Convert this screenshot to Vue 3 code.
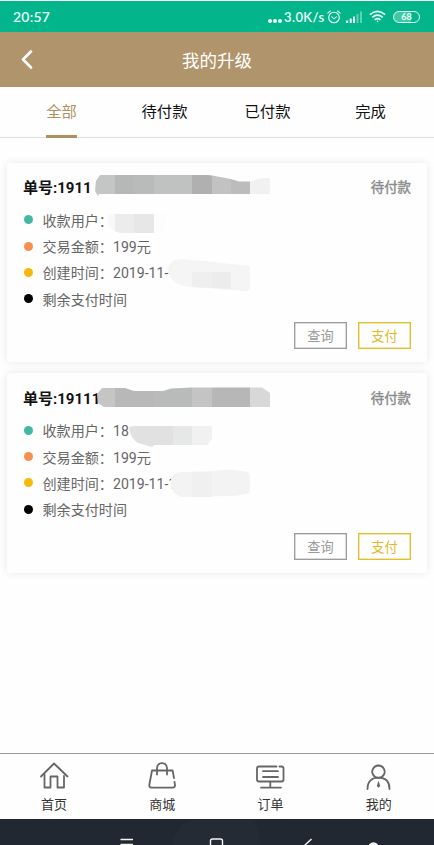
<script setup>
const tabs = ['全部', '待付款', '已付款', '完成']

const orders = [
  {
    id: '1911',
    user: '',
    amount: '199元',
    created: '2019-11-',
    masks: [
      { d: 'M91 33 L88 28 L89 18 L93 12 H108 V31 H92 Z', fill: '#c4c5c5' },
      { d: 'M108 12 H127 V31 H108 Z', fill: '#b6b7b7' },
      { d: 'M127 12 H147 V31 H127 Z', fill: '#b9baba' },
      { d: 'M147 12 H185 V31 H147 Z', fill: '#c0c1c1' },
      { d: 'M185 12 H201 L205 12.500 V31 H185 Z', fill: '#b0b0b0' },
      { d: 'M205 12.500 L224 16 V31 H205 Z', fill: '#c2c2c2' },
      { d: 'M224 16 L232 18.500 H243 V31 H224 Z', fill: '#bcbcbc' },
      { d: 'M243 18.500 L255 15 H263 V31 H243 Z', fill: '#f1f1f1' },
      { d: 'M102 51 H108 V68 Q101 66 101 58 Z', fill: '#f8f8f8' },
      { d: 'M108 51 H127 V70 H113 L108 68 Z', fill: '#ececec' },
      { d: 'M127 51 H147 V70 H127 Z', fill: '#e6e7e7' },
      { d: 'M147 51 H157 Q160 60 155 70 H147 Z', fill: '#fcfcfc' },
      { d: 'M161 106 Q162 97 174 96 L205 99 L243 103 V126 L239 128 L185 124 Q163 123 161 106 Z', fill: '#f5f5f5' },
      { d: 'M185 109 H205 V125 L185 124 Z', fill: '#efefef' },
      { d: 'M205 109 H224 V126 L205 125 Z', fill: '#ececec' },
    ],
  },
  {
    id: '19111',
    user: '18',
    amount: '199元',
    created: '2019-11-1',
    masks: [
      { d: 'M90 21 L95 15 H108 V34 H97 L91 30 Z', fill: '#c5c5c5' },
      { d: 'M108 15 H118 L127 18 H147 V34 H108 Z', fill: '#b8b8b8' },
      { d: 'M147 18 H156 L164 15.500 L185 14.500 V34 H147 Z', fill: '#b9baba' },
      { d: 'M185 14.500 H205 V34 H185 Z', fill: '#c4c4c4' },
      { d: 'M205 14.500 H243 V34 H205 Z', fill: '#b7b7b7' },
      { d: 'M243 14.500 H255 L263 20 V34 H243 Z', fill: '#d8d8d8' },
      { d: 'M122 54 L126 53 H166 V72 H147 L145 74 L131 70 Q123 65 122 54 Z', fill: '#e1e1e1' },
      { d: 'M166 53 H185 V72 H166 Z', fill: '#e6e7e7' },
      { d: 'M185 53 H205 V66 L200 72 H185 Z', fill: '#f1f1f1' },
      { d: 'M164 107 Q165 99 176 99 L207 98 Q215 96 228 97 L241 99 Q243 101 243 106 V119 Q240 122 224 123 L174 124 Q163 120 164 107 Z', fill: '#f3f3f3' },
      { d: 'M185 99 H205 V124 H185 Z', fill: '#f0f0f0' },
    ],
  },
]

const navItems = [
  {
    label: '首页',
    paths: ['M1 14.500 L14 1.500 L27.500 14.500', 'M4.500 12.500 V25.500 H10.500 V14.500 H17.500 V25.500 H24 V14'],
  },
  {
    label: '商城',
    paths: ['M9 12.500 V6 Q9.500 1.200 14 1.200 Q18.500 1.200 19 6 V12.500', 'M26 16 L24.600 8.500 H4 L1.300 23 Q1 25.600 3.500 25.600 H24.500 Q27.300 25.600 27 23 L26.500 20'],
  },
  {
    label: '订单',
    paths: ['M20.500 4.500 H3 Q1 4.500 1 6.500 V17.500 Q1 19.500 3 19.500 H25.500 Q27.500 19.500 27.500 17.500 V6.500 Q27.500 4.500 25.500 4.500 H23.500', 'M7 9.200 H22 M7 15 H22', 'M14.300 20 V25.500 M5 25.600 H25'],
  },
  {
    label: '我的',
    paths: ['M14.500 3.500 A6.200 6.200 0 1 1 14.400 3.500', 'M3.500 27 C3.500 19 8 15.700 14.500 15.700 C21 15.700 25.500 19 25.500 27'],
    tie: 'M14.500 18.500 L16.200 24 L14.500 25.800 L12.800 24 Z',
  },
]
</script>

<template>
  <div class="screen">
    <div class="status">
      <span class="clock">20:57</span>
      <span class="dots"><i></i><i></i><i></i></span>
      <span class="speed">3.0K/s</span>
      <svg class="alarm" width="14" height="14" viewBox="0 0 14 14" fill="none" stroke="#e9fff8" stroke-width="1.100" stroke-linecap="round">
        <circle cx="7" cy="7.500" r="5.300" />
        <path d="M.8 3.200 L3.400 1 M13.200 3.200 L10.600 1 M4.800 6.800 L7 8.800 L9.400 6.800" />
      </svg>
      <svg class="signal" width="17" height="12" viewBox="0 0 17 12" fill="#e9fff8">
        <path d="M0 9.500h2.200V12H0zM3.700 7.500h2V12h-2zM7 5.500h2V12H7z" />
        <path d="M10.500 3h2v9h-2zM14 .5h2V12h-2z" opacity=".4" />
      </svg>
      <svg class="wifi" width="17" height="13" viewBox="0 0 17 13" fill="none" stroke="#e9fff8" stroke-width="1.600">
        <path d="M.8 4.600 Q8.500 -2 16.200 4.600 M3.300 7.300 Q8.500 2.800 13.700 7.300 M5.600 9.800 Q8.500 7.300 11.400 9.800" />
        <circle cx="8.500" cy="11.300" r=".8" fill="#e9fff8" stroke="none" />
      </svg>
      <span class="battery">68</span>
    </div>

    <header class="header">
      <svg class="back" width="12" height="20" viewBox="0 0 12 20" fill="none" stroke="#fff" stroke-width="2.600" stroke-linecap="round" stroke-linejoin="round">
        <path d="M10 1.500 L2 9.500 L10 17.500" />
      </svg>
      <h1>我的升级</h1>
    </header>

    <nav class="tabs">
      <div v-for="(tab, i) in tabs" :key="tab" class="tab">
        <span class="tab-label" :class="{ active: i === 0 }">{{ tab }}</span>
      </div>
    </nav>

    <main class="orders">
      <article v-for="(order, i) in orders" :key="i" class="card">
        <div class="card-head">
          <span class="number">单号:{{ order.id }}</span>
          <span class="state">待付款</span>
        </div>
        <ul class="rows">
          <li><i class="dot teal"></i>收款用户：{{ order.user }}</li>
          <li><i class="dot orange"></i>交易金额：{{ order.amount }}</li>
          <li><i class="dot yellow"></i>创建时间：{{ order.created }}</li>
          <li><i class="dot black"></i>剩余支付时间</li>
        </ul>
        <div class="actions">
          <button class="btn">查询</button>
          <button class="btn pay">支付</button>
        </div>
        <svg class="masks" width="420" height="200" viewBox="0 0 420 200">
          <path v-for="(m, k) in order.masks" :key="k" :d="m.d" :fill="m.fill" />
        </svg>
      </article>
    </main>

    <nav class="bottom">
      <div v-for="item in navItems" :key="item.label" class="nav-item">
        <svg width="29" height="28" viewBox="0 0 29 28" fill="none" stroke="#666" stroke-width="1.800" stroke-linecap="round" stroke-linejoin="round">
          <path v-for="p in item.paths" :key="p" :d="p" />
          <path v-if="item.tie" :d="item.tie" fill="#666" stroke="none" />
        </svg>
        <span>{{ item.label }}</span>
      </div>
    </nav>

    <div class="system">
      <svg width="434" height="26" viewBox="0 0 434 26" fill="none" stroke="#f4f5f6" stroke-width="1.400">
        <path d="M172 26 Q177 5 192 1 H252 Q260 10 260 26 Z" fill="#242b35" stroke="none" />
        <path d="M120.500 20.500 H133 M120.500 25.500 H133" />
        <rect x="210.500" y="20" width="12" height="12" rx="2" />
        <path d="M311.500 20 L304 27" />
        <circle cx="373.500" cy="28.500" r="4.500" fill="#f4f5f6" />
      </svg>
    </div>
  </div>
</template>

<style>
body {
  margin: 0;
  background: #fefefe;
}
</style>

<style scoped>
.screen {
  box-sizing: border-box;
  width: 434px;
  height: 845px;
  padding-top: 1px;
  overflow: hidden;
  display: flex;
  flex-direction: column;
  background: #fefefe;
  font-family: Roboto, "Noto Sans CJK SC", sans-serif;
}
.status {
  flex: none;
  box-sizing: border-box;
  height: 31px;
  padding: 0 14px 0 13px;
  display: flex;
  align-items: center;
  background: #03b58b;
  color: #e9fff8;
  font-family: Lato, "Noto Sans", sans-serif;
  font-weight: 600;
}
.clock {
  font-size: 14px;
  letter-spacing: 0.2px;
  margin-right: auto;
}
.dots {
  display: flex;
  gap: 1px;
  margin: 8px 2px 0 0;
}
.dots i {
  width: 4px;
  height: 4px;
  border-radius: 50%;
  background: #e9fff8;
}
.speed {
  width: 43px;
  font-size: 13px;
  letter-spacing: 0.4px;
}
.signal {
  margin-left: 5px;
}
.wifi {
  margin-left: 6px;
}
.battery {
  box-sizing: border-box;
  width: 27px;
  height: 12px;
  margin-left: 7px;
  border: 1px solid #d8fff2;
  border-radius: 6px;
  background: linear-gradient(90deg, #42c8a5 68%, #03b58b 68%);
  font-size: 9px;
  font-weight: 700;
  line-height: 10px;
  text-align: center;
}
.header {
  flex: none;
  height: 55px;
  display: grid;
  grid-template-columns: 60px 1fr 60px;
  align-items: center;
  background: #b0946b;
  color: #fff;
}
.back {
  margin-left: 21px;
}
.header h1 {
  margin: 0 0 1px;
  font-size: 17.5px;
  font-weight: 400;
  text-align: center;
}
.tabs {
  flex: none;
  box-sizing: border-box;
  height: 51px;
  padding: 0 12px 0 10px;
  display: grid;
  grid-template-columns: repeat(4, 1fr);
  border-bottom: 1px solid #dedede;
}
.tab {
  display: flex;
  justify-content: center;
}
.tab-label {
  box-sizing: border-box;
  height: 51px;
  font-size: 15.3px;
  line-height: 50px;
  color: #111;
}
.tab-label.active {
  color: #ae905e;
  border-bottom: 3px solid #ae905e;
}
.orders {
  flex: 1;
  padding: 24.5px 7px 0;
  display: flex;
  flex-direction: column;
  gap: 11px;
}
.card {
  position: relative;
  box-sizing: border-box;
  height: 199.5px;
  padding: 14.5px 16px 13px;
  display: flex;
  flex-direction: column;
  border-radius: 3px;
  background: #fefefe;
  box-shadow: 0 0 8px rgba(0, 0, 0, 0.09);
}
.card-head {
  display: flex;
  justify-content: space-between;
  height: 22px;
  line-height: 22px;
}
.number {
  font-size: 15px;
  font-weight: 700;
  color: #111;
}
.state {
  font-size: 13.4px;
  color: #8a8a8a;
  -webkit-text-stroke: 0.4px #8a8a8a;
}
.rows {
  list-style: none;
  margin: 7.5px 0 0;
  padding: 0;
}
.rows li {
  display: flex;
  align-items: center;
  height: 26.4px;
  font-size: 14.1px;
  color: #666;
}
.dot {
  width: 9px;
  height: 9px;
  margin: 0 9.5px 0 1px;
  border-radius: 50%;
}
.teal { background: #43b8a0; }
.orange { background: #f5904f; }
.yellow { background: #f5b90d; }
.black { background: #000; }
.actions {
  display: flex;
  justify-content: flex-end;
  gap: 11px;
  margin-top: auto;
}
.btn {
  box-sizing: border-box;
  width: 53px;
  height: 27px;
  padding: 0;
  border: 1px solid #9c9c9c;
  box-shadow: inset 0 0 0 0.5px #b5b5b5;
  background: transparent;
  color: #999;
  font-family: inherit;
  font-size: 13.2px;
}
.btn.pay {
  border-color: #e0c02e;
  box-shadow: inset 0 0 0 0.5px #e8ce58;
  color: #dfba26;
}
.masks {
  position: absolute;
  top: 0;
  left: 0;
}
.bottom {
  flex: none;
  box-sizing: border-box;
  height: 66px;
  padding-right: 1px;
  display: grid;
  grid-template-columns: repeat(4, 1fr);
  border-top: 1px solid #999;
  background: #fefefe;
}
.nav-item {
  display: flex;
  flex-direction: column;
  align-items: center;
  padding-top: 8px;
  font-size: 13px;
  line-height: 20px;
  color: #333;
}
.nav-item span {
  margin-top: 5px;
}
.system {
  flex: none;
  height: 26px;
  background: #212831;
}
</style>
